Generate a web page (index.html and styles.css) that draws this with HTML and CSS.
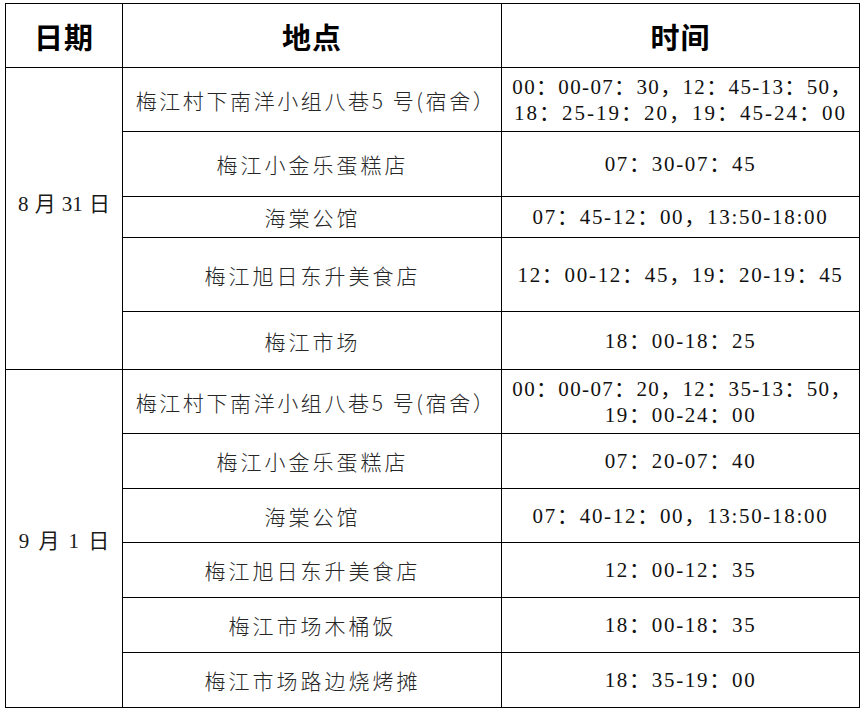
FILE: index.html
```html
<!DOCTYPE html>
<html lang="zh-CN">
<head>
<meta charset="utf-8">
<title>活动轨迹</title>
<link rel="stylesheet" href="styles.css">
</head>
<body>
<table class="trace">
  <colgroup>
    <col class="c-date">
    <col class="c-place">
    <col class="c-time">
  </colgroup>
  <thead>
    <tr class="r-head">
      <th>日期</th>
      <th>地点</th>
      <th>时间</th>
    </tr>
  </thead>
  <tbody>
    <tr class="r-64">
      <td class="date date-a" rowspan="5">8 月 31 日</td>
      <td class="place place-long">梅江村下南洋小组八巷5 号(宿舍）</td>
      <td class="time"><span class="ln ln-a">00：00-07：30，12：45-13：50，</span><span class="ln ln-b">18：25-19：20，19：45-24：00</span></td>
    </tr>
    <tr class="r-65">
      <td class="place">梅江小金乐蛋糕店</td>
      <td class="time">07：30-07：45</td>
    </tr>
    <tr class="r-41">
      <td class="place">海棠公馆</td>
      <td class="time">07：45-12：00，13:50-18:00</td>
    </tr>
    <tr class="r-74">
      <td class="place">梅江旭日东升美食店</td>
      <td class="time">12：00-12：45，19：20-19：45</td>
    </tr>
    <tr class="r-58">
      <td class="place">梅江市场</td>
      <td class="time">18：00-18：25</td>
    </tr>
    <tr class="r-64">
      <td class="date date-b" rowspan="6">9 月 1 日</td>
      <td class="place place-long">梅江村下南洋小组八巷5 号(宿舍）</td>
      <td class="time"><span class="ln ln-a">00：00-07：20，12：35-13：50，</span><span class="ln">19：00-24：00</span></td>
    </tr>
    <tr class="r-55">
      <td class="place">梅江小金乐蛋糕店</td>
      <td class="time">07：20-07：40</td>
    </tr>
    <tr class="r-54">
      <td class="place">海棠公馆</td>
      <td class="time">07：40-12：00，13:50-18:00</td>
    </tr>
    <tr class="r-55">
      <td class="place">梅江旭日东升美食店</td>
      <td class="time">12：00-12：35</td>
    </tr>
    <tr class="r-55">
      <td class="place">梅江市场木桶饭</td>
      <td class="time">18：00-18：35</td>
    </tr>
    <tr class="r-55">
      <td class="place">梅江市场路边烧烤摊</td>
      <td class="time">18：35-19：00</td>
    </tr>
  </tbody>
</table>
</body>
</html>
```

FILE: styles.css
```css
html, body {
  margin: 0;
  padding: 0;
  background: #ffffff;
}

body {
  padding: 3px 0 0 5px;
  font-family: "Liberation Serif", "Noto Sans CJK SC", serif;
  color: #111111;
}

.trace {
  border-collapse: collapse;
  table-layout: fixed;
  width: 854px;
}

.c-date { width: 117px; }
.c-place { width: 379px; }
.c-time { width: 358px; }

.trace th,
.trace td {
  border: 1px solid #000000;
  padding: 0;
  text-align: center;
  vertical-align: middle;
  white-space: nowrap;
}

.trace th {
  font-family: "Noto Sans CJK SC", sans-serif;
  font-size: 29px;
  font-weight: 700;
  color: #000000;
  letter-spacing: 1px;
}

.r-head { height: 64px; }
.r-64 { height: 64px; }
.r-65 { height: 65px; }
.r-41 { height: 41px; }
.r-74 { height: 74px; }
.r-58 { height: 58px; }
.r-55 { height: 55px; }
.r-54 { height: 54px; }

.trace .date {
  font-family: "Liberation Serif", "Noto Sans CJK SC", serif;
  font-size: 21px;
  color: #1a1a1a;
}

.trace .date-a {
  padding-bottom: 34px;
  word-spacing: 1px;
}

.trace .date-b {
  word-spacing: 4px;
}

.trace .place {
  font-family: "Noto Sans CJK SC", sans-serif;
  font-weight: 300;
  font-size: 21px;
  letter-spacing: 3px;
  padding-left: 1px;
  color: #262626;
}

.trace .place-long {
  letter-spacing: 2.6px;
  padding-left: 8px;
}

.trace .time {
  font-family: "Liberation Serif", "Noto Sans CJK SC", serif;
  font-size: 21px;
  line-height: 26px;
  letter-spacing: 1.7px;
  color: #111111;
}

.ln {
  display: block;
}

.ln-a {
  letter-spacing: 1.35px;
  padding-left: 4px;
}

.ln-b {
  letter-spacing: 2px;
}
```
